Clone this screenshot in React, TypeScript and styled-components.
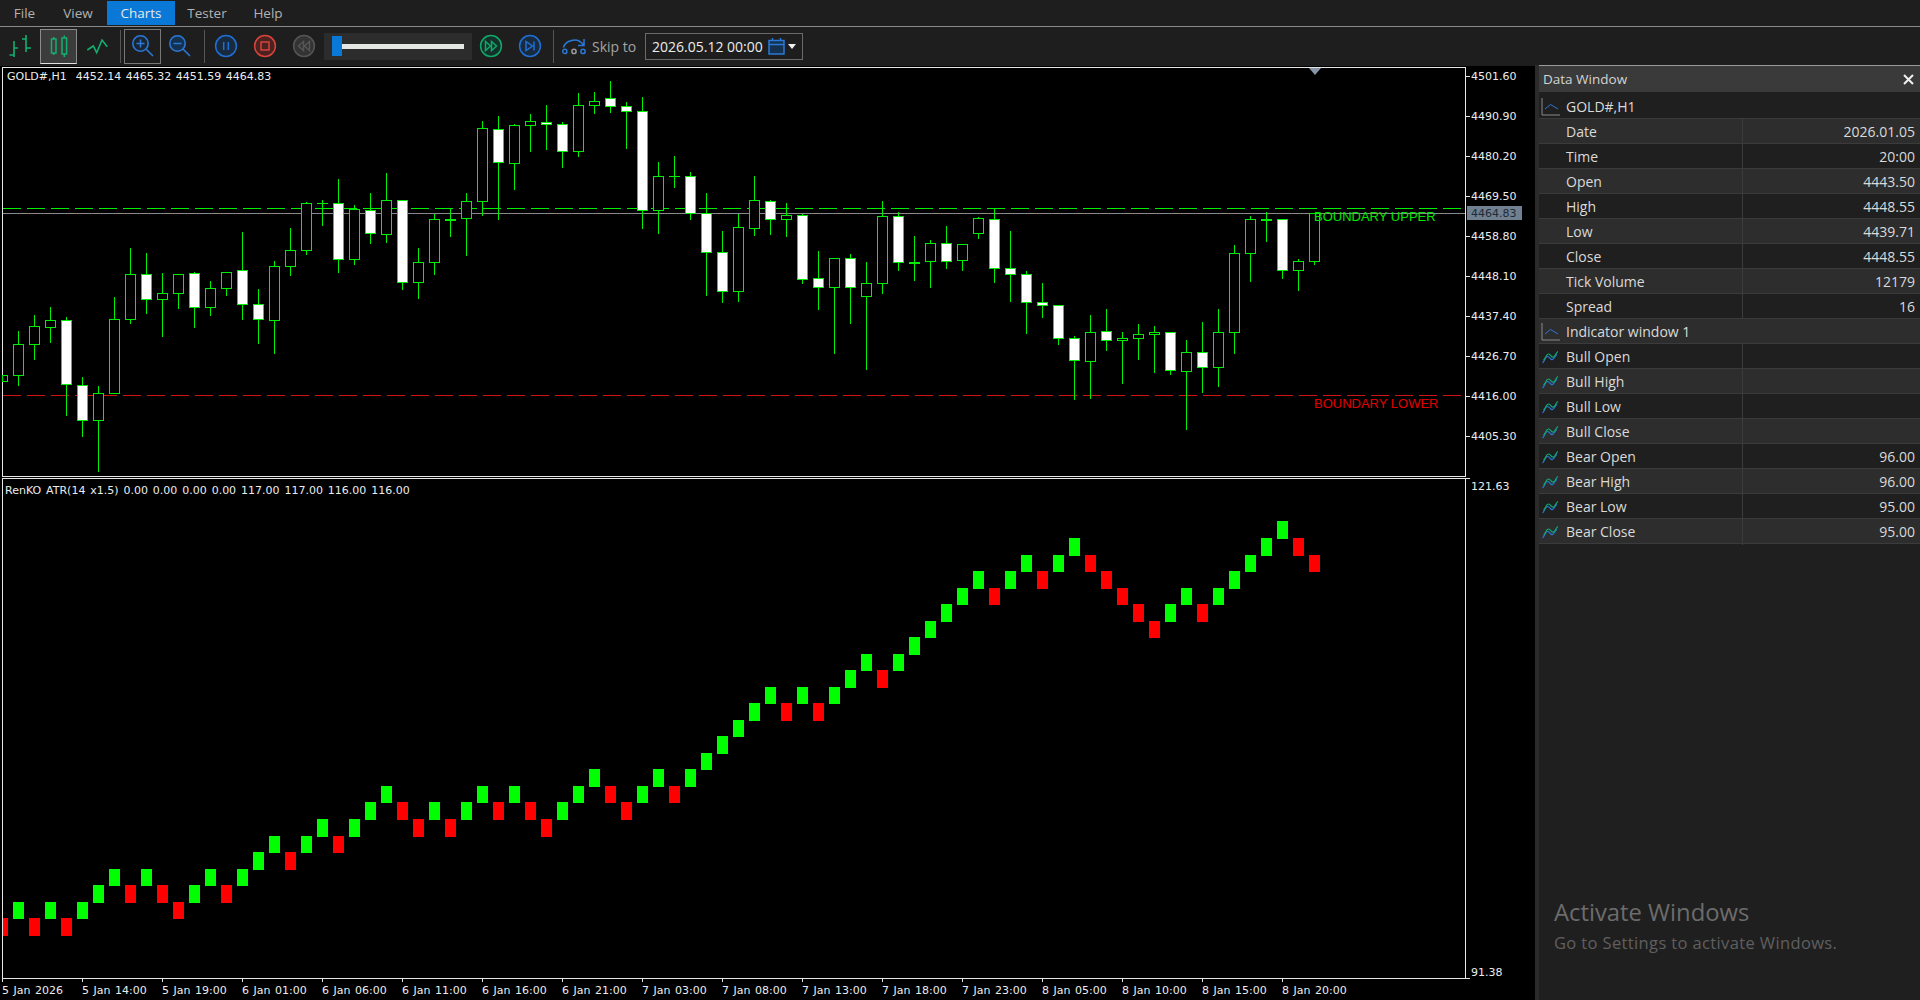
import React from "react";
import styled, { createGlobalStyle } from "styled-components";

const Global = createGlobalStyle`
  html, body { margin: 0; padding: 0; background: #1e1e1e; overflow: hidden; }
  #root { width: 1920px; height: 1000px; }
`;

const UI = `"Open Sans", "Noto Sans", sans-serif`;
const CHART = `"DejaVu Sans", Verdana, sans-serif`;
const LABEL = `"Liberation Sans", Arial, sans-serif`;

const Page = styled.div`
  width: 1920px; height: 1000px; display: flex; flex-direction: column;
  background: #1e1e1e; font-family: ${UI}; overflow: hidden;
`;
const MenuBar = styled.div`
  height: 26px; display: flex; align-items: stretch;
  border-bottom: 1px solid #8a8a8a; background: #1e1e1e;
`;
const MenuItem = styled.div<{ $active?: boolean; $w: number }>`
  width: ${p => p.$w}px; margin: 1px 0; display: flex; align-items: center; justify-content: center;
  font-size: 13.5px; color: ${p => (p.$active ? "#e8e8e8" : "#b2b2b2")};
  background: ${p => (p.$active ? "#0a78d7" : "transparent")};
`;
const Toolbar = styled.div`
  height: 38px; display: flex; align-items: center; padding-left: 1px; background: #1e1e1e;
`;
const ToolSlot = styled.div<{ $w: number; $active?: boolean; $boxed?: boolean; $ml?: number }>`
  width: ${p => p.$w}px; height: 35px; box-sizing: border-box; margin-left: ${p => p.$ml ?? 0}px;
  display: flex; align-items: center; justify-content: center;
  background: ${p => (p.$active ? "#3c3c3c" : "transparent")};
  border: 1px solid ${p => (p.$active ? "#8c8c8c" : p.$boxed ? "#777" : "transparent")};
  border-bottom-color: ${p => (p.$active ? "#e0e0e0" : p.$boxed ? "#777" : "transparent")};
`;
const Divider = styled.div<{ $l: number; $r: number }>`
  width: 1px; height: 33px; background: #555; margin: 0 ${p => p.$r}px 0 ${p => p.$l}px;
`;
const Slider = styled.div`
  width: 148px; height: 27px; background: #2c2c2c; display: flex; align-items: center;
  padding-left: 8px; box-sizing: border-box;
`;
const SliderThumb = styled.div`
  width: 10px; height: 20px; background: #0a78d7;
`;
const SliderTrack = styled.div`
  width: 122px; height: 5px; background: #e4e6e4;
`;
const SkipIcon = styled.div`
  margin-left: 8px; width: 24px; height: 17px; display: flex;
`;
const SkipLabel = styled.span`
  margin-left: 6px; width: 44px; font-size: 14px; color: #a4a4a4; white-space: nowrap;
`;
const DateBox = styled.div`
  margin-left: 9px; width: 158px; height: 27px; box-sizing: border-box; border: 1px solid #6a6a6a;
  display: flex; align-items: center; padding-left: 6px; font-size: 14px; color: #ececec;
`;
const DateText = styled.span`
  width: 116px; flex: none; white-space: nowrap;
`;
const Caret = styled.div`
  margin-left: 3px; width: 0; height: 0;
  border-left: 4.5px solid transparent; border-right: 4.5px solid transparent; border-top: 5px solid #f0f0f0;
`;
const Main = styled.div`
  flex: 1; display: flex; min-height: 0;
`;
const ChartColumn = styled.div`
  width: 1535px; margin-top: 1px; background: #000; display: flex; flex-direction: column;
`;
const ChartSvg = styled.svg`
  display: block; flex: none;
`;
const ChartText = styled.text<{ $color?: string; $words?: number }>`
  font-family: ${CHART}; font-size: 11px; fill: ${p => p.$color ?? "#ececec"};
  white-space: pre; word-spacing: ${p => p.$words ?? 1}px;
`;
const ObjectLabel = styled.text<{ $color: string }>`
  font-family: ${LABEL}; font-size: 13px; fill: ${p => p.$color};
`;
const Splitter = styled.div`
  width: 4px; background: #2b2b2b; flex: none;
`;
const DataWindow = styled.div`
  flex: 1; display: flex; flex-direction: column; background: #1f1f1f; color: #dadada;
`;
const DataHeader = styled.div`
  height: 26px; border-top: 1px solid #9a9a9a; background: #3a3a3a; margin-bottom: 2px;
  display: flex; align-items: center; justify-content: space-between;
  padding: 0 6px 0 4px; font-size: 13.5px; color: #d4d4d4;
`;
const Row = styled.div<{ $alt?: boolean }>`
  height: 25px; box-sizing: border-box; border-bottom: 1px solid #3b3b3b; display: grid;
  grid-template-columns: 204px 1fr; background: ${p => (p.$alt ? "#2d2d2d" : "#1f1f1f")};
  font-size: 14px; line-height: 26px;
`;
const LabelCell = styled.div<{ $section?: boolean }>`
  display: flex; align-items: center; padding-left: 2px;
  border-right: 1px solid ${p => (p.$section ? "transparent" : "#3b3b3b")};
  white-space: nowrap;
`;
const IconBox = styled.div`
  width: 25px; height: 24px; flex: none; display: flex; align-items: center;
`;
const ValueCell = styled.div`
  text-align: right; padding-right: 5px;
`;
const Watermark = styled.div`
  margin-top: auto; padding: 0 0 45px 15px;
`;
const WatermarkTitle = styled.div`
  font-size: 23.8px; line-height: 37px; color: #6c6c6c;
`;
const WatermarkText = styled.div`
  font-size: 16.5px; line-height: 24px; letter-spacing: 0.37px; color: #5f5f5f;
`;

const BLUE = "#2a78d8";
const GRN = "#10b070";
const LINE = "#00ee00";
const AXIS = "#e6e6e6";

const BarsIcon = () => (
  <svg width="24" height="24" viewBox="0 0 24 24" fill="none" stroke={GRN} strokeWidth="1.6">
    <path d="M6 7v16M1.5 21H6M6 14h4M18 1v17M14 5h4M18 14h5" />
  </svg>
);
const CandlesIcon = () => (
  <svg width="24" height="24" viewBox="0 0 24 24" fill="none" stroke={GRN} strokeWidth="1.5">
    <path d="M6.7 3v2M6.7 19v2M17.3 1.5V4M17.3 20v3" />
    <rect x="4.5" y="5" width="4.5" height="14" />
    <rect x="15" y="4" width="4.6" height="16" />
  </svg>
);
const LineIcon = () => (
  <svg width="24" height="24" viewBox="0 0 24 24" fill="none" stroke={GRN} strokeWidth="1.6">
    <path d="M2.3 16 8.3 12l3.4 6.7L17 6l5.3 6.7" />
  </svg>
);
const ZoomIcon = ({ plus, fill }: { plus?: boolean; fill: string }) => (
  <svg width="26" height="26" viewBox="0 0 26 26" fill={fill} stroke={BLUE} strokeWidth="1.6">
    <circle cx="10.5" cy="10.5" r="7.7" />
    <path d={plus ? "M6.5 10.5h8M10.5 6.5v8M16 16l7 7" : "M6.5 10.5h8M16 16l7 7"} />
  </svg>
);
const RoundIcon = ({ color, children, fill }: { color: string; children: React.ReactNode; fill?: string }) => (
  <svg width="24" height="24" viewBox="0 0 24 24" fill="none" stroke={color} strokeWidth="1.5">
    <circle cx="12" cy="12" r="10.4" fill={fill ?? "none"} />
    {children}
  </svg>
);
const SkipGlyph = () => (
  <svg width="24" height="17" viewBox="0 0 24 17" fill="none" stroke={BLUE} strokeWidth="1.5">
    <path d="M1.5 9.5C3 3 15 -2 21.5 7M22 1v6.5h-6" />
    <circle cx="2.8" cy="13.4" r="2.1" />
    <circle cx="12" cy="13.4" r="2.1" stroke="#9a9a9a" />
    <circle cx="21" cy="13.4" r="2.1" />
  </svg>
);
const CalendarIcon = () => (
  <svg width="17" height="17" viewBox="0 0 17 17" fill="#14324f" stroke={BLUE} strokeWidth="1.5">
    <rect x="1" y="2.5" width="15" height="13.5" />
    <path d="M1 6.5h15M4.5 0v3M12.5 0v3" />
  </svg>
);
const CloseIcon = () => (
  <svg width="11" height="11" viewBox="0 0 11 11" stroke="#f0f0f0" strokeWidth="2">
    <path d="M1 1l9 9M10 1l-9 9" />
  </svg>
);
const WindowIcon = () => (
  <svg width="20" height="20" viewBox="0 0 20 20" fill="none">
    <path d="M1 1v17h18" stroke="#8a8a8a" strokeWidth="1" />
    <path d="M4 12 9.5 7.5 17 12" stroke={BLUE} strokeWidth="1" />
  </svg>
);
const SeriesIcon = () => (
  <svg width="20" height="20" viewBox="0 0 20 20" fill="none" strokeWidth="1.2">
    <path d="M1.5 16C3.5 15 3.8 9.5 6.5 9.5S9.5 13.5 11.5 12.5 14 8.5 16 7.5" stroke={BLUE} />
    <path d="M2.5 13C4.5 12 5 7 7.5 7S10.5 11 12.5 10 15 5.5 17 4.5" stroke="#10a870" />
  </svg>
);

type C = [number, number, number, number, number];
// hi, bodyTop, bodyBottom, lo, filled — vertical values are 3x the offset from y=60
const candles: C[] = [
  [810,853,946,975,0],[762,799,853,897,0],[738,781,800,846,0],[768,781,973,1065,1],[948,976,1081,1128,1],
  [975,1000,1081,1233,0],[708,778,1000,1000,0],[561,643,778,790,0],[576,643,718,759,1],[636,700,718,828,0],
  [643,643,700,744,0],[633,640,742,801,1],[660,685,742,765,0],[633,637,685,705,0],[513,631,733,777,1],
  [684,733,778,849,1],[600,619,781,879,0],[501,571,619,645,0],[423,430,571,582,0],[417,430,430,495,0],
  [354,430,598,636,1],[432,448,598,612,0],[396,451,520,549,1],[336,421,523,546,0],[421,421,667,687,1],
  [561,607,667,714,0],[460,478,607,642,0],[441,477,477,528,1],[396,424,475,585,0],[180,205,424,465,0],
  [165,208,307,478,1],[189,196,310,387,0],[159,184,196,273,0],[132,187,193,267,1],[183,193,274,321,1],
  [96,136,274,288,0],[93,124,136,159,0],[60,115,139,156,1],[123,139,154,264,1],[108,154,451,504,1],
  [303,349,451,519,0],[285,349,349,381,0],[333,349,460,477,1],[396,460,577,705,1],[510,577,694,726,1],
  [460,502,694,723,0],[345,421,505,525,0],[417,424,478,522,1],[426,466,478,528,0],[460,466,658,670,1],
  [570,655,682,747,1],[591,595,682,879,0],[579,595,682,789,1],[603,670,709,927,0],[420,469,670,699,0],
  [453,469,607,630,1],[525,605,605,660,1],[537,550,604,681,0],[495,550,604,624,1],[553,553,601,630,0],
  [468,475,520,534,0],[441,478,625,666,1],[510,625,643,723,1],[630,643,727,819,1],[666,727,736,771,1],
  [733,736,835,852,1],[826,835,901,1017,1],[762,817,904,1014,0],[744,814,841,870,1],[813,835,841,969,0],
  [789,823,835,897,0],[795,817,823,936,0],[817,817,931,942,1],[837,877,934,1107,0],[783,877,922,996,1],
  [744,817,922,978,0],[552,580,817,879,0],[465,478,580,663,0],[453,477,477,544,1],[478,478,631,654,1],
  [595,604,631,690,0],[460,460,604,612,0],
];
const toY = (z: number) => Math.round(60 + z / 3) + 0.5;

const prices: [string, number][] = [
  ["4501.60", 76], ["4490.90", 116], ["4480.20", 156], ["4469.50", 196], ["4458.80", 236],
  ["4448.10", 276], ["4437.40", 316], ["4426.70", 356], ["4416.00", 396], ["4405.30", 436],
];

const CandleMark = ({ c, k }: { c: C; k: number }) => {
  const [hi, top, bot, lo, f] = c;
  const x = 18 + 16 * k;
  const wick = `M${x + 0.5} ${toY(hi)}V${toY(top)}M${x + 0.5} ${toY(bot)}V${toY(lo)}`;
  return (
    <g>
      <path d={wick} stroke={LINE} fill="none" />
      {top === bot ? (
        <path d={`M${x - 5} ${toY(top)}H${x + 6}`} stroke={LINE} strokeWidth={f ? 2 : 1} />
      ) : (
        <rect x={x - 4.5} y={toY(top)} width={10} height={toY(bot) - toY(top)} fill={f ? "#fff" : "#000"} stroke={LINE} />
      )}
    </g>
  );
};

const PricePane = () => (
  <ChartSvg width={1535} height={411} viewBox="0 66 1535 411" shapeRendering="crispEdges">
    <path d="M2.5 477V67.5H1465.5V477" stroke={AXIS} fill="none" />
    <path d="M3 476.5H1465" stroke={AXIS} />
    <path d="M3 208.5H1461" stroke={LINE} strokeDasharray="18 6" />
    <path d="M3 213.5H1465" stroke="#8a8a8a" />
    <path d="M3 395.5H1461" stroke="#d01414" strokeDasharray="18 6" />
    <rect x="2.5" y={toY(946)} width="5" height={toY(962) - toY(946)} fill="#000" stroke={LINE} />
    {candles.map((c, k) => <CandleMark key={k} c={c} k={k} />)}
    <ChartText x={7} y={80}>{"GOLD#,H1  4452.14 4465.32 4451.59 4464.83"}</ChartText>
    <ObjectLabel x={1314} y={221} $color="#00e800">BOUNDARY UPPER</ObjectLabel>
    <ObjectLabel x={1314} y={408} $color="#e00000">BOUNDARY LOWER</ObjectLabel>
    <path d="M1309 68h12l-6 7z" fill="#8696a8" shapeRendering="auto" />
    {prices.map(([t, y]) => (
      <g key={t}>
        <path d={`M1466 ${y + 0.5}h4`} stroke={AXIS} />
        <ChartText x={1471} y={y + 4}>{t}</ChartText>
      </g>
    ))}
    <rect x="1467" y="206" width="55" height="14" fill="#708090" />
    <ChartText x={1471} y={217} $color="#1e2a36">4464.83</ChartText>
  </ChartSvg>
);

const renko = [
  -95, 96, -95, 96, -95, 96, 97, 98, -97, 98, -97, -96, 97, 98, -97, 98, 99, 100, -99, 100, 101, -100, 101, 102, 103,
  -102, -101, 102, -101, 102, 103, -102, 103, -102, -101, 102, 103, 104, -103, -102, 103, 104, -103, 104, 105, 106, 107,
  108, 109, -108, 109, -108, 109, 110, 111, -110, 111, 112, 113, 114, 115, 116, -115, 116, 117, -116, 117, 118, -117,
  -116, -115, -114, -113, 114, 115, -114, 115, 116, 117, 118, 119, -118, -117,
];
const levelY = (v: number) => Math.round(478 + (121.63 - v) * 16.53);

const times = [
  "5 Jan 2026", "5 Jan 14:00", "5 Jan 19:00", "6 Jan 01:00", "6 Jan 06:00", "6 Jan 11:00", "6 Jan 16:00", "6 Jan 21:00",
  "7 Jan 03:00", "7 Jan 08:00", "7 Jan 13:00", "7 Jan 18:00", "7 Jan 23:00", "8 Jan 05:00", "8 Jan 10:00", "8 Jan 15:00", "8 Jan 20:00",
];

const IndicatorPane = () => (
  <ChartSvg width={1535} height={523} viewBox="0 477 1535 523" shapeRendering="crispEdges">
    <path d="M2.5 478.5H1470M1465.5 478V978M2.5 478V978.5H1470" stroke={AXIS} fill="none" />
    {renko.map((r, i) => {
      const v = Math.abs(r);
      const top = levelY(v);
      const c = 18 + 16 * (i - 1);
      const left = Math.max(3, c - 5);
      return (
        <rect key={i} x={left} y={top} width={c + 6 - left} height={levelY(v - 1) - top + 1} fill={r > 0 ? "#00ff00" : "#ff0000"} />
      );
    })}
    <ChartText x={5} y={494} $words={1.4}>RenKO ATR(14 x1.5) 0.00 0.00 0.00 0.00 117.00 117.00 116.00 116.00</ChartText>
    <ChartText x={1471} y={490}>121.63</ChartText>
    <ChartText x={1471} y={976}>91.38</ChartText>
    {times.map((t, i) => (
      <g key={t}>
        <path d={`M${2.5 + 80 * i} 978v4`} stroke={AXIS} />
        <ChartText x={2 + 80 * i} y={994}>{t}</ChartText>
      </g>
    ))}
  </ChartSvg>
);

const quoteRows: [string, string][] = [
  ["Date", "2026.01.05"], ["Time", "20:00"], ["Open", "4443.50"], ["High", "4448.55"],
  ["Low", "4439.71"], ["Close", "4448.55"], ["Tick Volume", "12179"], ["Spread", "16"],
];
const seriesRows: [string, string][] = [
  ["Bull Open", ""], ["Bull High", ""], ["Bull Low", ""], ["Bull Close", ""],
  ["Bear Open", "96.00"], ["Bear High", "96.00"], ["Bear Low", "95.00"], ["Bear Close", "95.00"],
];

export default function App() {
  return (
    <Page>
      <Global />
      <MenuBar>
        <MenuItem $w={49}>File</MenuItem>
        <MenuItem $w={58}>View</MenuItem>
        <MenuItem $w={68} $active>Charts</MenuItem>
        <MenuItem $w={64}>Tester</MenuItem>
        <MenuItem $w={58}>Help</MenuItem>
      </MenuBar>
      <Toolbar>
        <ToolSlot $w={37}><BarsIcon /></ToolSlot>
        <ToolSlot $w={37} $ml={2} $active><CandlesIcon /></ToolSlot>
        <ToolSlot $w={40}><LineIcon /></ToolSlot>
        <Divider $l={3} $r={3} />
        <ToolSlot $w={37} $boxed><ZoomIcon plus fill="#1a2733" /></ToolSlot>
        <ToolSlot $w={37}><ZoomIcon fill="#14324f" /></ToolSlot>
        <Divider $l={6} $r={1} />
        <ToolSlot $w={39}>
          <RoundIcon color="#1f6fd6" fill="#182a3e"><path d="M9.7 8v8M14.3 8v8" /></RoundIcon>
        </ToolSlot>
        <ToolSlot $w={39}>
          <RoundIcon color="#d8443c" fill="#4a2220"><rect x="8" y="8" width="8" height="8" /></RoundIcon>
        </ToolSlot>
        <ToolSlot $w={40}>
          <RoundIcon color="#555" fill="#333"><path d="M11.5 7.5 6.5 12l5 4.5zM17.5 7.5l-5 4.5 5 4.5z" /></RoundIcon>
        </ToolSlot>
        <Slider><SliderThumb /><SliderTrack /></Slider>
        <ToolSlot $w={38}>
          <RoundIcon color="#10a868" fill="#14302a"><path d="M6.5 7.5l5 4.5-5 4.5zM12.5 7.5l5 4.5-5 4.5z" /></RoundIcon>
        </ToolSlot>
        <ToolSlot $w={39}>
          <RoundIcon color="#1f6fd6" fill="#182a3e"><path d="M8 7.5l6.5 4.5L8 16.5zM16 7.5v9" /></RoundIcon>
        </ToolSlot>
        <Divider $l={4} $r={0} />
        <SkipIcon><SkipGlyph /></SkipIcon>
        <SkipLabel>Skip to</SkipLabel>
        <DateBox>
          <DateText>2026.05.12 00:00</DateText>
          <CalendarIcon />
          <Caret />
        </DateBox>
      </Toolbar>
      <Main>
        <ChartColumn>
          <PricePane />
          <IndicatorPane />
        </ChartColumn>
        <Splitter />
        <DataWindow>
          <DataHeader>
            <span>Data Window</span>
            <CloseIcon />
          </DataHeader>
          <Row>
            <LabelCell $section><IconBox><WindowIcon /></IconBox>GOLD#,H1</LabelCell>
          </Row>
          {quoteRows.map(([l, v], i) => (
            <Row key={l} $alt={i % 2 === 0}>
              <LabelCell><IconBox />{l}</LabelCell>
              <ValueCell>{v}</ValueCell>
            </Row>
          ))}
          <Row $alt>
            <LabelCell $section><IconBox><WindowIcon /></IconBox>Indicator window 1</LabelCell>
          </Row>
          {seriesRows.map(([l, v], i) => (
            <Row key={l} $alt={i % 2 === 1}>
              <LabelCell><IconBox><SeriesIcon /></IconBox>{l}</LabelCell>
              <ValueCell>{v}</ValueCell>
            </Row>
          ))}
          <Watermark>
            <WatermarkTitle>Activate Windows</WatermarkTitle>
            <WatermarkText>Go to Settings to activate Windows.</WatermarkText>
          </Watermark>
        </DataWindow>
      </Main>
    </Page>
  );
}
